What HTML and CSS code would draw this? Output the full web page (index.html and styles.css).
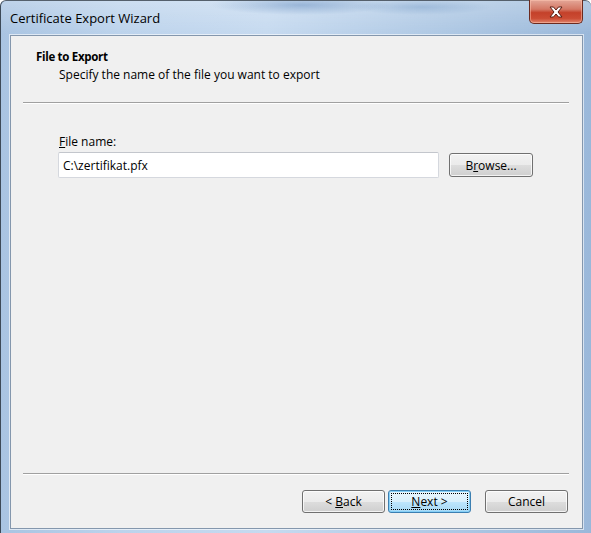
FILE: index.html
```html
<!DOCTYPE html>
<html lang="en">
<head>
    <meta charset="UTF-8">
    <title>Certificate Export Wizard</title>
    <link rel="stylesheet" href="styles.css">
</head>
<body>
<div class="window">
    <div class="titlebar">
        <span class="title">Certificate Export Wizard</span>
        <span class="close">
            <svg width="16" height="12" viewBox="0 0 16 12">
                <path d="M2 1 L5.5 1 L8 4 L10.5 1 L14 1 L10 6 L14 11 L10.5 11 L8 8 L5.5 11 L2 11 L6 6 Z"
                      fill="#ffffff" stroke="#5a1d12" stroke-width="1" stroke-linejoin="round"/>
            </svg>
        </span>
    </div>
    <div class="client">
        <div class="header">
            <div class="head-title">File to Export</div>
            <div class="head-sub">Specify the name of the file you want to export</div>
        </div>
        <div class="sep"></div>
        <div class="content">
            <label class="label" for="fname"><u>F</u>ile name:</label>
            <div class="file-row">
                <input type="text" id="fname" class="file-input" value="C:\zertifikat.pfx">
                <button class="btn browse">B<u>r</u>owse...</button>
            </div>
        </div>
        <div class="sep"></div>
        <div class="footer">
            <button class="btn">&lt; <u>B</u>ack</button>
            <button class="btn default"><span class="focus"><u>N</u>ext &gt;</span></button>
            <button class="btn cancel">Cancel</button>
        </div>
    </div>
</div>
</body>
</html>
```

FILE: styles.css
```css
* {
    box-sizing: border-box;
}

body {
    margin: 0;
    background: #ffffff;
    font-family: "Open Sans", "Noto Sans", sans-serif;
    font-size: 12px;
    color: #000000;
}

.window {
    width: 591px;
    height: 533px;
    display: flex;
    flex-direction: column;
    padding: 0 8px 4px 9px;
    border-left: 1px solid #3d4a58;
    border-top: 1px solid #55606c;
    border-radius: 6px 6px 0 0;
    background: linear-gradient(to right, #a9c4e2 0%, #bcd3ec 20%, #c6daf0 45%, #aec8e4 75%, #9ab8da 100%);
}

.titlebar {
    height: 34px;
    display: flex;
    justify-content: space-between;
    align-items: flex-start;
    margin-left: -9px;
    margin-right: -8px;
    padding: 0 8px 0 9px;
    background:
        radial-gradient(ellipse 90px 10px at 300px 4px, rgba(100, 140, 190, .5), transparent),
        radial-gradient(ellipse 70px 8px at 420px 6px, rgba(110, 150, 195, .4), transparent),
        linear-gradient(to bottom, rgba(255, 255, 255, .25), rgba(255, 255, 255, 0));
    border-radius: 6px 6px 0 0;
}

.title {
    font-size: 13px;
    line-height: 34px;
    color: #000000;
}

.close {
    width: 54px;
    height: 24px;
    margin-top: -1px;
    display: flex;
    align-items: center;
    justify-content: center;
    border: 1px solid #6b2a1f;
    border-top: none;
    border-radius: 0 0 5px 5px;
    background: linear-gradient(to bottom, #e4a798 0%, #d47865 40%, #c4412a 55%, #cb4c34 80%, #e0846c 100%);
    box-shadow: inset 0 0 0 1px rgba(255, 200, 180, .5);
}

.client {
    flex: 1;
    display: flex;
    flex-direction: column;
    background: #f0f0f0;
    border: 1px solid #8497ad;
    box-shadow: 0 0 0 1px rgba(255, 255, 255, .6);
}

.header {
    padding: 13px 0 0 25px;
    height: 66px;
}

.head-title {
    font-weight: bold;
    font-size: 11.5px;
    letter-spacing: -0.3px;
    line-height: 16px;
}

.head-sub {
    margin-top: 2px;
    padding-left: 23px;
    line-height: 16px;
}

.sep {
    height: 2px;
    margin: 0 13px 0 12px;
    border-top: 1px solid #a0a0a0;
    border-bottom: 1px solid #ffffff;
}

.content {
    flex: 1;
    padding: 30px 0 0 47px;
}

.label {
    display: block;
    padding-left: 1px;
    line-height: 16px;
    margin-bottom: 2px;
}

.file-row {
    display: flex;
    align-items: center;
    gap: 10px;
}

.file-input {
    width: 381px;
    height: 26px;
    padding: 0 4px;
    font: inherit;
    border: 1px solid #d5d8de;
    border-top-color: #c3c6cc;
    border-radius: 2px;
    background: #ffffff;
    outline: none;
}

.btn {
    width: 83px;
    height: 23px;
    padding: 0;
    font: inherit;
    color: #000000;
    border: 1px solid #707070;
    border-radius: 3px;
    background: linear-gradient(to bottom, #f2f2f2 0%, #ebebeb 50%, #dddddd 51%, #cfcfcf 100%);
    box-shadow: inset 0 0 0 1px rgba(255, 255, 255, .75);
}

.browse {
    width: 84px;
    height: 24px;
}

.footer {
    height: 53px;
    display: flex;
    align-items: center;
    padding: 0 14px 0 0;
    justify-content: flex-end;
}

.default {
    margin-left: 3px;
    border-color: #3c7fb1;
    background: linear-gradient(to bottom, #eaf6fd 0%, #d9f0fc 50%, #bee6fd 51%, #a7d9f5 100%);
    box-shadow: inset 0 0 0 1px #86d0f7;
    padding: 2px;
}

.focus {
    display: flex;
    align-items: center;
    justify-content: center;
    height: 100%;
    border: 1px dotted #000000;
}

.cancel {
    margin-left: 14px;
}
```
